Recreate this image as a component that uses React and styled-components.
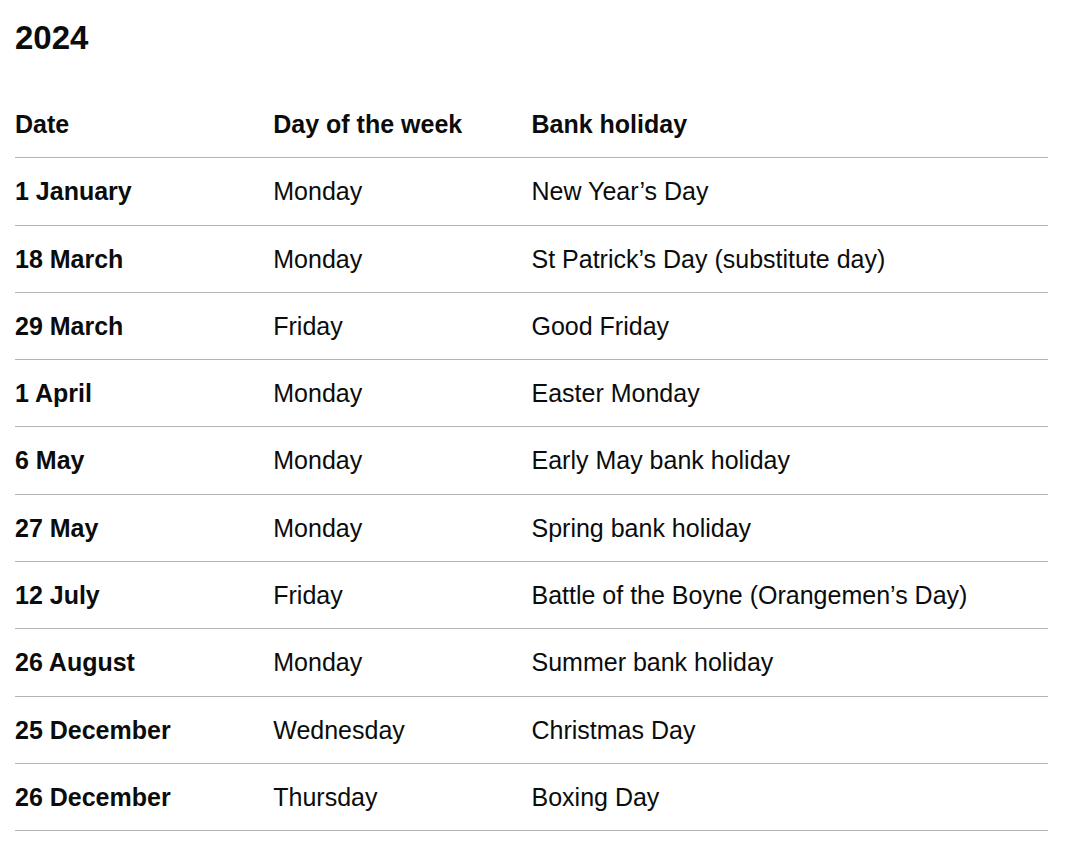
import React from "react";
import styled, { createGlobalStyle } from "styled-components";

const GlobalStyle = createGlobalStyle`
  body {
    margin: 0;
    background: #ffffff;
    color: #0b0c0c;
    font-family: "Liberation Sans", Arial, sans-serif;
  }
`;

const holidays = [
  { date: "1 January", day: "Monday", name: "New Year’s Day" },
  { date: "18 March", day: "Monday", name: "St Patrick’s Day (substitute day)" },
  { date: "29 March", day: "Friday", name: "Good Friday" },
  { date: "1 April", day: "Monday", name: "Easter Monday" },
  { date: "6 May", day: "Monday", name: "Early May bank holiday" },
  { date: "27 May", day: "Monday", name: "Spring bank holiday" },
  { date: "12 July", day: "Friday", name: "Battle of the Boyne (Orangemen’s Day)" },
  { date: "26 August", day: "Monday", name: "Summer bank holiday" },
  { date: "25 December", day: "Wednesday", name: "Christmas Day" },
  { date: "26 December", day: "Thursday", name: "Boxing Day" },
];

function App() {
  return (
    <>
      <GlobalStyle />
      <Page>
        <Heading>2024</Heading>
        <Table>
          <thead>
            <tr>
              <HeadCell $width="25%">Date</HeadCell>
              <HeadCell $width="25%">Day of the week</HeadCell>
              <HeadCell>Bank holiday</HeadCell>
            </tr>
          </thead>
          <tbody>
            {holidays.map((h) => (
              <tr key={h.date}>
                <RowHead>{h.date}</RowHead>
                <Cell>{h.day}</Cell>
                <Cell>{h.name}</Cell>
              </tr>
            ))}
          </tbody>
        </Table>
      </Page>
    </>
  );
}

export default App;

const Page = styled.div`
  padding: 20px 32px 20px 15px;
`;

const Heading = styled.h2`
  margin: 0 0 35px;
  font-size: 33px;
  line-height: 36px;
  font-weight: 700;
`;

const Table = styled.table`
  width: 100%;
  border-collapse: collapse;
  border-spacing: 0;
  font-size: 25px;
`;

const Cell = styled.td`
  padding: 18px 20px 18px 0;
  line-height: 30.3px;
  text-align: left;
  vertical-align: top;
  border-bottom: 1px solid #b1b4b6;
  font-weight: 400;
`;

const HeadCell = styled(Cell).attrs({ as: "th" })`
  width: ${(p) => p.$width || "auto"};
  font-weight: 700;
`;

const RowHead = styled(Cell).attrs({ as: "th", scope: "row" })`
  font-weight: 700;
`;
